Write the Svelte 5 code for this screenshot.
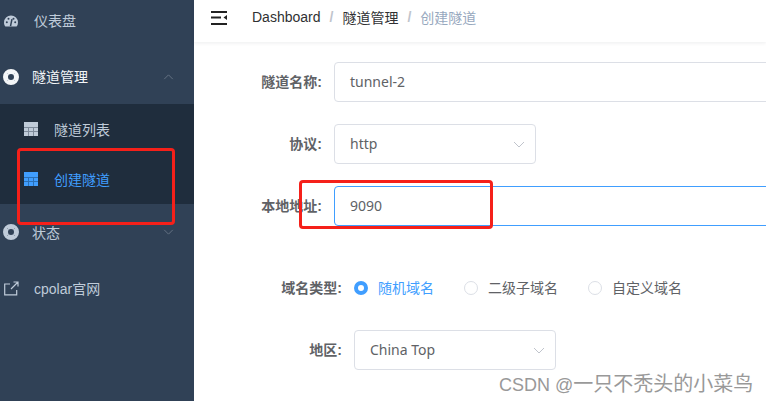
<script>
  const formRows = [
    { label: '隧道名称:', value: 'tunnel-2', kind: 'wide' },
    { label: '协议:', value: 'http', kind: 'select' },
    { label: '本地地址:', value: '9090', kind: 'focus' }
  ];
  const radios = [
    { label: '随机域名', on: true },
    { label: '二级子域名', on: false },
    { label: '自定义域名', on: false }
  ];
</script>

<div class="page">
  <aside class="side">
    <div class="menu">
      <div class="item plain up">
        <svg class="ico gauge" viewBox="1 2.200 14 11.200"><path fill="#bfcbd9" d="M8 2.200a7 7 0 0 0-7 7c0 1.600.5 3 1.400 4.200h11.200A7 7 0 0 0 15 9.200a7 7 0 0 0-7-7z"/><circle cx="3.800" cy="9" r="1" fill="#304156"/><circle cx="5.500" cy="5.500" r="1" fill="#304156"/><circle cx="10.500" cy="5.500" r="1" fill="#304156"/><circle cx="12.200" cy="9" r="1" fill="#304156"/><path d="M7.500 13l1.500-7" stroke="#304156" stroke-width="1.500"/></svg>
        <span class="t1">仪表盘</span>
      </div>
      <div class="item head up">
        <svg class="ring" viewBox="0 0 16 16"><circle cx="8" cy="8" r="5.500" fill="none" stroke="#f4f6f8" stroke-width="5"/><path d="M4 4l1.500 1.500M12 4l-1.500 1.500M4 12l1.500-1.500M12 12l-1.500-1.500" stroke="#c9d2dc" stroke-width="1"/></svg>
        <span class="t2 white">隧道管理</span>
        <svg class="arrow" viewBox="0 0 12 7"><path d="M1 6l5-5 5 5" fill="none" stroke="#6d7a8a" stroke-width="1"/></svg>
      </div>
      <div class="sub">
        <div class="subitem">
          <svg class="grid" viewBox="0 0 14 14"><path fill="#bfcbd9" d="M0 0h14v14H0z"/><path d="M0 5.500h14M0 9.500h14M4.500 5.500V14M9.500 5.500V14" stroke="#7d8a9a" stroke-width="1"/></svg>
          <span>隧道列表</span>
        </div>
        <div class="subitem active">
          <svg class="grid" viewBox="0 0 14 14"><path fill="#409eff" d="M0 0h14v14H0z"/><path d="M0 5.500h14M0 9.500h14M4.500 5.500V14M9.500 5.500V14" stroke="#2a6fb5" stroke-width="1"/></svg>
          <span>创建隧道</span>
        </div>
      </div>
      <div class="item head">
        <svg class="ring" viewBox="0 0 16 16"><circle cx="8" cy="8" r="5.500" fill="none" stroke="#bfcbd9" stroke-width="5"/><path d="M4 4l1.500 1.500M12 4l-1.500 1.500M4 12l1.500-1.500M12 12l-1.500-1.500" stroke="#8f9dad" stroke-width="1"/></svg>
        <span class="t2">状态</span>
        <svg class="arrow" viewBox="0 0 12 7"><path d="M1 1l5 5 5-5" fill="none" stroke="#6d7a8a" stroke-width="1"/></svg>
      </div>
      <div class="item plain">
        <svg class="ico" viewBox="0 0 15 15"><path d="M6 3H.7v10.800h12V9M7 8l6.500-6.500M9.500 1h4.500v4.500" fill="none" stroke="#bfcbd9" stroke-width="1.200"/></svg>
        <span class="t1">cpolar官网</span>
      </div>
    </div>
  </aside>

  <main class="main">
    <header class="bar">
      <svg class="burger" viewBox="0 0 16 14"><path d="M0 1h16M0 6.500h10M0 13h16" stroke="#222" stroke-width="2"/><path d="M16 4v5l-3.500-2.500z" fill="#222"/></svg>
      <nav class="crumbs">
        <span class="c">Dashboard</span><span class="sep">/</span>
        <span class="c">隧道管理</span><span class="sep">/</span>
        <span class="c last">创建隧道</span>
      </nav>
    </header>

    <form class="form">
      {#each formRows as r}
        <div class="row">
          <span class="label">{r.label}</span>
          <div class="input {r.kind}">
            <span>{r.value}</span>
            {#if r.kind === 'select'}
              <svg class="chev" viewBox="0 0 12 7"><path d="M1 1l5 5 5-5" fill="none" stroke="#c0c4cc" stroke-width="1"/></svg>
            {/if}
          </div>
        </div>
      {/each}

      <div class="row lower spaced">
        <span class="label">域名类型:</span>
        <div class="radios">
          {#each radios as r}
            <div class="radio" class:on={r.on}>
              <i class="dot"></i><span>{r.label}</span>
            </div>
          {/each}
        </div>
      </div>

      <div class="row lower">
        <span class="label">地区:</span>
        <div class="input select">
          <span>China Top</span>
          <svg class="chev" viewBox="0 0 12 7"><path d="M1 1l5 5 5-5" fill="none" stroke="#c0c4cc" stroke-width="1"/></svg>
        </div>
      </div>
    </form>
  </main>

  <div class="mark m1"></div>
  <div class="mark m2"></div>
  <div class="wm"><span class="wm-l">CSDN @</span>一只不秃头的小菜鸟</div>
</div>

<style>
  :global(body) { margin: 0; }
  .page {
    position: relative;
    display: flex;
    width: 766px;
    height: 401px;
    overflow: hidden;
    background: #fff;
    font-family: "Liberation Sans", "Noto Sans CJK SC", sans-serif;
    font-size: 14px;
    color: #606266;
  }
  .side { width: 194px; flex: none; background: #304156; color: #bfcbd9; overflow: hidden; }
  .menu { margin-top: -7px; }
  .item { height: 56px; display: flex; align-items: center; position: relative; }
  .up > span { margin-bottom: 2px; }
  .plain { padding-left: 4px; }
  .head { padding-left: 3px; }
  .ico { width: 15px; height: 15px; flex: none; }
  .gauge { width: 14px; height: 12px; margin-right: 1px; }
  .ring { width: 16px; height: 16px; flex: none; }
  .t1 { margin-left: 15px; }
  .t2 { margin-left: 13px; }
  .white { color: #f4f6f8; }
  .arrow { position: absolute; left: 163px; top: 25px; width: 11px; height: 6px; }
  .sub { background: #1f2d3d; margin-top: -1px; }
  .subitem { height: 50px; display: flex; align-items: center; padding-left: 24px; }
  .subitem.active { color: #409eff; }
  .grid { width: 14px; height: 14px; flex: none; margin-right: 16px; }

  .main { flex: 1; min-width: 0; }
  .bar {
    height: 42px;
    display: flex;
    align-items: center;
    padding-left: 17px;
    box-shadow: 0 1px 4px rgba(0, 21, 41, 0.08);
  }
  .burger { width: 16px; height: 14px; margin-top: -6px; }
  .crumbs { margin-left: 25px; margin-top: -9px; display: flex; align-items: center; white-space: nowrap; }
  .c { color: #303133; }
  .c.last { color: #97a8be; }
  .sep { color: #c0c4cc; font-weight: 700; margin: 0 9px; }

  .form { padding-top: 20px; }
  .row { display: flex; align-items: center; height: 40px; margin-bottom: 22px; }
  .row.spaced { margin-top: 42px; }
  .label { width: 128px; padding-right: 12px; margin-bottom: 2px; text-align: right; font-weight: 700; flex: none; }
  .lower .label { width: 148px; }
  .input {
    height: 40px;
    box-sizing: border-box;
    border: 1px solid #dcdfe6;
    border-radius: 4px;
    padding: 0 15px;
    display: flex;
    align-items: center;
    justify-content: space-between;
    font-family: "Noto Sans", "Noto Sans CJK SC", sans-serif;
    flex: none;
  }
  .input > span { margin-bottom: 2px; }
  .wide, .focus { width: 450px; }
  .focus { border-color: #409eff; }
  .select { width: 202px; }
  .chev { width: 12px; height: 7px; margin-right: -5px; }
  .radios { display: flex; gap: 30px; }
  .radio { display: flex; align-items: center; gap: 10px; }
  .radio > span { margin-bottom: 2px; }
  .radio.on { color: #409eff; }
  .dot { width: 14px; height: 14px; box-sizing: border-box; border: 1px solid #dcdfe6; border-radius: 50%; display: block; }
  .radio.on .dot { border: 4px solid #409eff; background: #fff; }

  .mark { position: absolute; border: 3px solid #f5201a; border-radius: 4px; box-sizing: border-box; }
  .m1 { left: 17px; top: 148px; width: 158px; height: 77px; }
  .m2 { left: 299px; top: 180px; width: 194px; height: 49px; }
  .wm { position: absolute; left: 499px; top: 368px; font-size: 20px; color: #999; white-space: nowrap; }
  .wm-l { font-size: 18px; }
</style>
